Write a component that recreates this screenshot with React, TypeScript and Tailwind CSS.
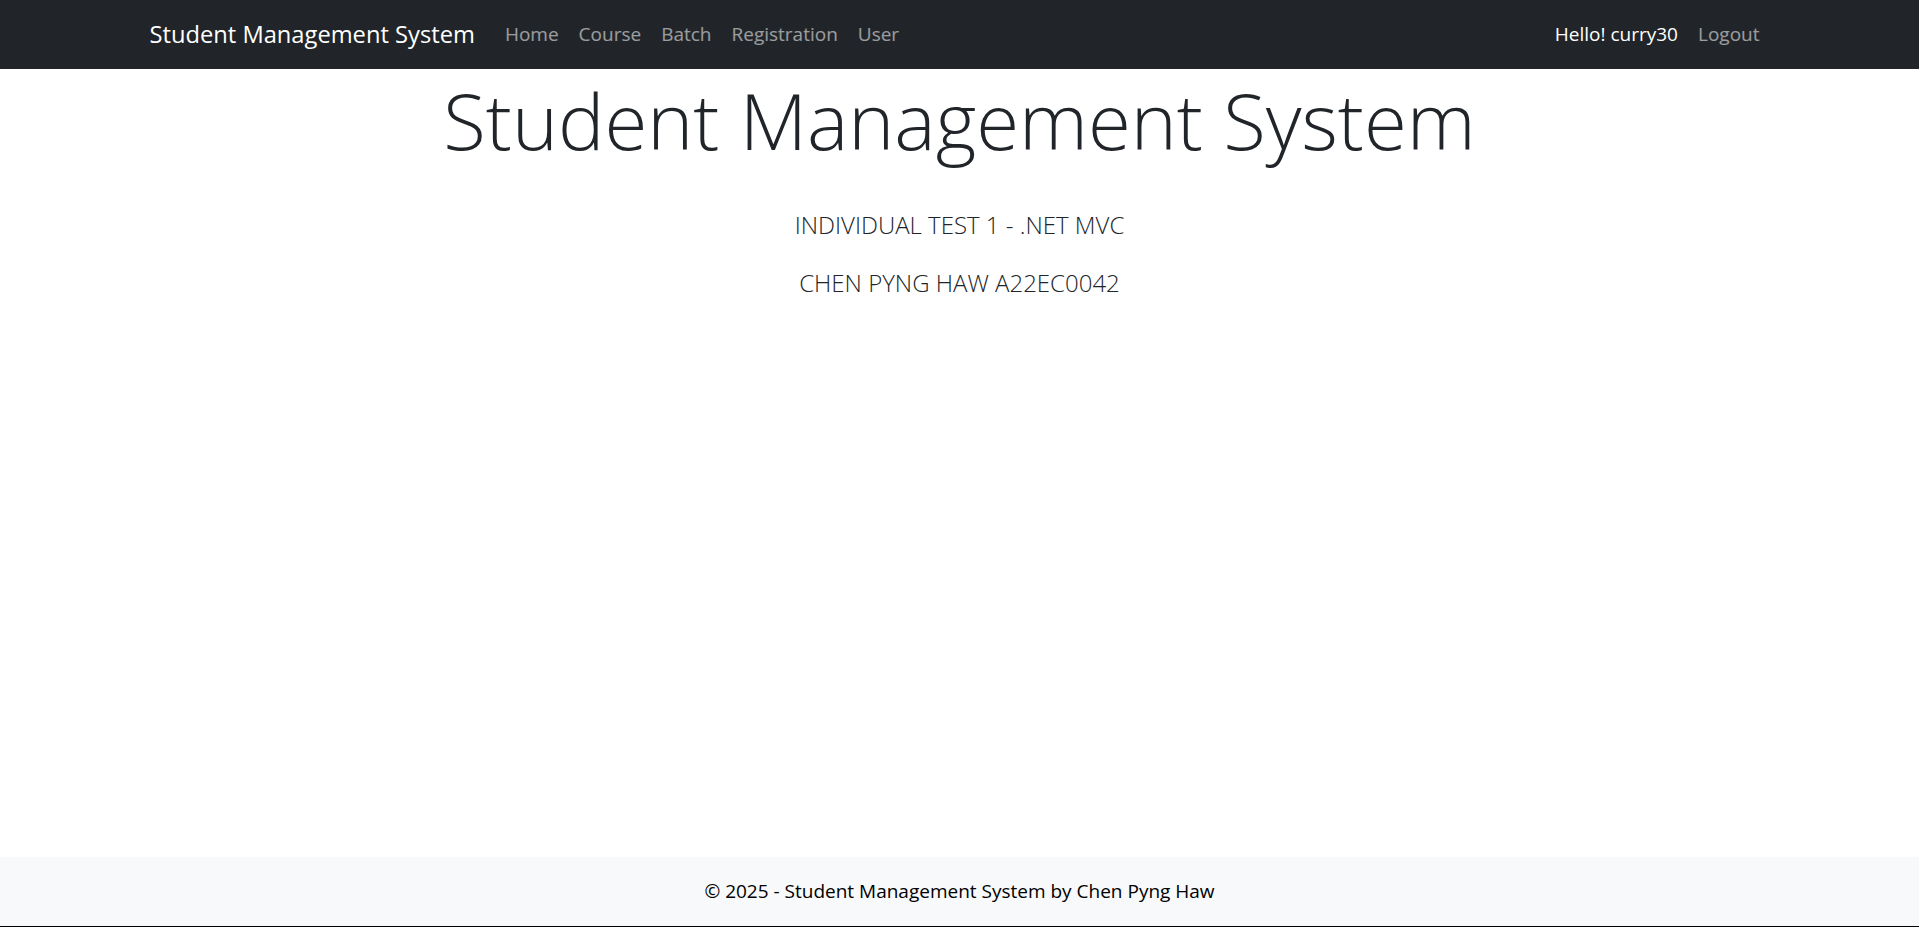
import React from "react";

const font = { fontFamily: '"Open Sans", "Noto Sans", sans-serif' };

export default function App() {
  return (
    <div className="flex h-[927px] flex-col bg-white" style={font}>
      {/* navbar */}
      <nav className="h-[69px] shrink-0 bg-[#212529]">
        <div className="mx-auto flex h-full max-w-[1650px] items-center px-[15px]">
          <span className="mr-[20px] text-[23.7px] text-white">Student Management System</span>
          <ul className="flex items-center text-[19px] text-white/55">
            <li className="px-[10px]">Home</li>
            <li className="px-[10px]">Course</li>
            <li className="px-[10px]">Batch</li>
            <li className="px-[10px]">Registration</li>
            <li className="px-[10px]">User</li>
          </ul>
          <ul className="ml-auto flex items-center text-[19px]">
            <li className="px-[10px] text-white">Hello! curry30</li>
            <li className="px-[10px] text-white/55">Logout</li>
          </ul>
        </div>
      </nav>

      {/* main */}
      <main className="flex-1 text-center text-[#212529]">
        <h1 className="mt-[4px] text-[78px] leading-[94px] font-light">Student Management System</h1>
        <p className="mt-[39px] text-[24px] leading-[37.5px] font-light">INDIVIDUAL TEST 1 - .NET MVC</p>
        <p className="mt-[20px] text-[24px] leading-[37.5px] font-light">CHEN PYNG HAW A22EC0042</p>
      </main>

      {/* footer */}
      <footer className="flex h-[70px] shrink-0 items-center justify-center border-b border-black bg-[#f8f9fa] text-[19px] text-black">
        © 2025 - Student Management System by Chen Pyng Haw
      </footer>
    </div>
  );
}
